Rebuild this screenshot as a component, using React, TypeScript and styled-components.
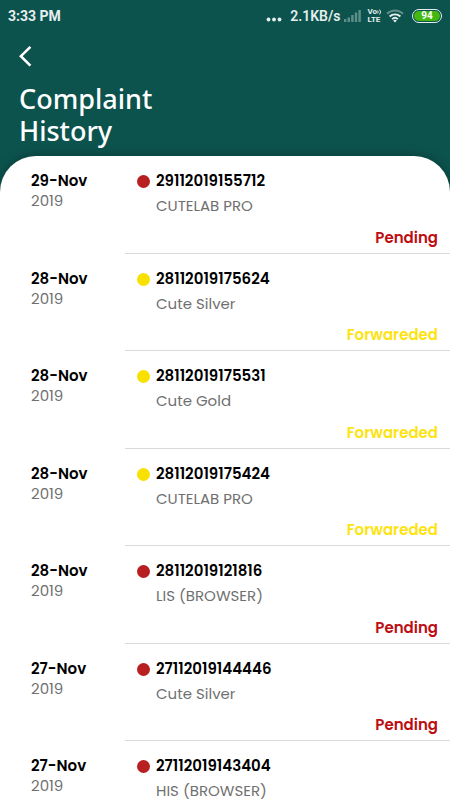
import React from "react";
import styled, { createGlobalStyle } from "styled-components";

const GlobalStyle = createGlobalStyle`
  * { box-sizing: border-box; }
  body {
    margin: 0;
    background: #0c534e;
    font-family: Poppins, Inter, "Open Sans", sans-serif;
    color: #000;
  }
`;

const Page = styled.div`
  height: 100vh;
  display: flex;
  flex-direction: column;
  background: #0c534e;
  overflow: hidden;
`;

const StatusBar = styled.div`
  flex: none;
  height: 32px;
  padding: 0 8px;
  display: flex;
  align-items: center;
  justify-content: space-between;
  color: #e6efee;
  font: 700 14px/16px Roboto, sans-serif;
`;

const StatusIcons = styled.div`
  display: flex;
  align-items: center;
  gap: 4px;
`;

const Speed = styled.span`
  margin-left: 4px;
  font-weight: 600;
`;

const Volte = styled.span`
  display: flex;
  flex-direction: column;
  margin-left: 2px;
  font: 700 8px/8px Roboto, sans-serif;
`;

const VoLine = styled.span`
  display: flex;
  align-items: center;
`;

const Battery = styled.span`
  width: 30px;
  height: 14px;
  margin-left: 4px;
  border: 1px solid #e6efee;
  border-radius: 7px;
  padding: 1px;
  display: flex;
`;

const BatteryFill = styled.span`
  flex: 1;
  border-radius: 5px;
  background: #43b80e;
  color: #fff;
  font: 700 10px/10px Roboto, sans-serif;
  text-align: center;
`;

const Header = styled.header`
  flex: none;
  padding: 12px 19px 9px;
`;

const BackButton = styled.button`
  display: block;
  border: 0;
  padding: 0;
  background: none;
  color: #fff;
  cursor: pointer;
  svg { display: block; }
`;

const Title = styled.h1`
  margin: 15px 0 0;
  width: min-content;
  color: #fff;
  font: 500 27px/32px "Noto Sans", sans-serif;
`;

const Panel = styled.main`
  flex: 1;
  min-height: 0;
  overflow-y: auto;
  scrollbar-width: none;
  background: #fff;
  border-radius: 36px 36px 0 0;
  box-shadow: 0 0 12px rgba(0, 0, 0, 0.3);
`;

const List = styled.ul`
  list-style: none;
  margin: 0;
  padding: 0;
`;

const Row = styled.li`
  display: grid;
  grid-template-columns: 125px 1fr;
  min-height: 98px;
  &:nth-child(even) { min-height: 97px; }
`;

const DateColumn = styled.div`
  padding: 15px 0 0 31px;
  line-height: 20px;
`;

const Day = styled.div`
  font-size: 15px;
  font-weight: 600;
`;

const Year = styled.div`
  font-size: 15px;
  font-weight: 400;
  color: #707070;
`;

const Details = styled.div`
  display: flex;
  flex-direction: column;
  padding: 15px 12px 4px;
  border-bottom: 1px solid #d9d9d9;
`;

const Ticket = styled.div`
  display: flex;
  align-items: center;
  gap: 6px;
  font-size: 15px;
  font-weight: 600;
  line-height: 20px;
`;

const Dot = styled.span<{ $color: string }>`
  width: 13px;
  height: 13px;
  border-radius: 50%;
  background: ${(p) => p.$color};
`;

const Product = styled.div`
  padding: 5px 0 0 19px;
  font-size: 15px;
  font-weight: 400;
  line-height: 20px;
  color: #707070;
`;

const Status = styled.div<{ $color: string }>`
  margin-top: auto;
  align-self: flex-end;
  font-size: 15px;
  font-weight: 600;
  line-height: 22px;
  color: ${(p) => p.$color};
`;

type State = "Pending" | "Forwareded";

const dotColors: Record<State, string> = { Pending: "#b71f20", Forwareded: "#f8e000" };
const textColors: Record<State, string> = { Pending: "#bd0e12", Forwareded: "#fde312" };

const complaints: { day: string; ticket: string; product: string; state: State }[] = [
  { day: "29-Nov", ticket: "29112019155712", product: "CUTELAB PRO", state: "Pending" },
  { day: "28-Nov", ticket: "28112019175624", product: "Cute Silver", state: "Forwareded" },
  { day: "28-Nov", ticket: "28112019175531", product: "Cute Gold", state: "Forwareded" },
  { day: "28-Nov", ticket: "28112019175424", product: "CUTELAB PRO", state: "Forwareded" },
  { day: "28-Nov", ticket: "28112019121816", product: "LIS (BROWSER)", state: "Pending" },
  { day: "27-Nov", ticket: "27112019144446", product: "Cute Silver", state: "Pending" },
  { day: "27-Nov", ticket: "27112019143404", product: "HIS (BROWSER)", state: "Pending" },
];

export default function App() {
  return (
    <>
      <GlobalStyle />
      <Page>
        <StatusBar>
          <span>3:33 PM</span>
          <StatusIcons>
            <svg width="16" height="14" viewBox="0 0 16 14" fill="currentColor" aria-hidden="true">
              <circle cx="2.5" cy="10.5" r="1.9" />
              <circle cx="8" cy="10.5" r="1.9" />
              <circle cx="13.5" cy="10.5" r="1.9" />
            </svg>
            <Speed>2.1KB/s</Speed>
            <svg width="17" height="14" viewBox="0 0 17 14" fill="#5f8f8b" aria-hidden="true">
              <rect x="0" y="10" width="2.4" height="3" />
              <rect x="3.6" y="8.5" width="2.4" height="4.5" />
              <rect x="7.2" y="6" width="2.4" height="7" />
              <rect x="10.8" y="3.5" width="2.4" height="9.5" />
              <rect x="14.4" y="1" width="2.4" height="12" />
            </svg>
            <Volte>
              <VoLine>
                Vo
                <svg width="5" height="6" viewBox="0 0 5 6" fill="none" stroke="currentColor" aria-hidden="true">
                  <path d="M.7 1.6q1 1.4 0 2.8M2.6.6q2 2.4 0 4.8" />
                </svg>
              </VoLine>
              <span>LTE</span>
            </Volte>
            <svg width="18" height="14" viewBox="0 0 18 14" fill="none" strokeWidth="1.9" aria-hidden="true">
              <path d="M1 4.8C5.5.4 12.5.4 17 4.8" stroke="#5f8f8b" />
              <path d="M3.6 7.5c3-2.9 7.8-2.9 10.8 0" stroke="currentColor" />
              <path d="M6.1 10.1c1.7-1.6 4.1-1.6 5.8 0" stroke="currentColor" />
              <path d="M7.1 11.6q1.9-1.6 3.8 0L9 13.5z" fill="currentColor" />
            </svg>
            <Battery>
              <BatteryFill>94</BatteryFill>
            </Battery>
          </StatusIcons>
        </StatusBar>
        <Header>
          <BackButton aria-label="Back">
            <svg width="14" height="24" viewBox="0 0 14 24" fill="none" stroke="currentColor" strokeWidth="2.6" aria-hidden="true">
              <path d="M11.4 2.8 1.9 12.2l9.5 9.4" />
            </svg>
          </BackButton>
          <Title>Complaint History</Title>
        </Header>
        <Panel>
          <List>
            {complaints.map((c) => (
              <Row key={c.ticket}>
                <DateColumn>
                  <Day>{c.day}</Day>
                  <Year>2019</Year>
                </DateColumn>
                <Details>
                  <Ticket>
                    <Dot $color={dotColors[c.state]} />
                    {c.ticket}
                  </Ticket>
                  <Product>{c.product}</Product>
                  <Status $color={textColors[c.state]}>{c.state}</Status>
                </Details>
              </Row>
            ))}
          </List>
        </Panel>
      </Page>
    </>
  );
}
